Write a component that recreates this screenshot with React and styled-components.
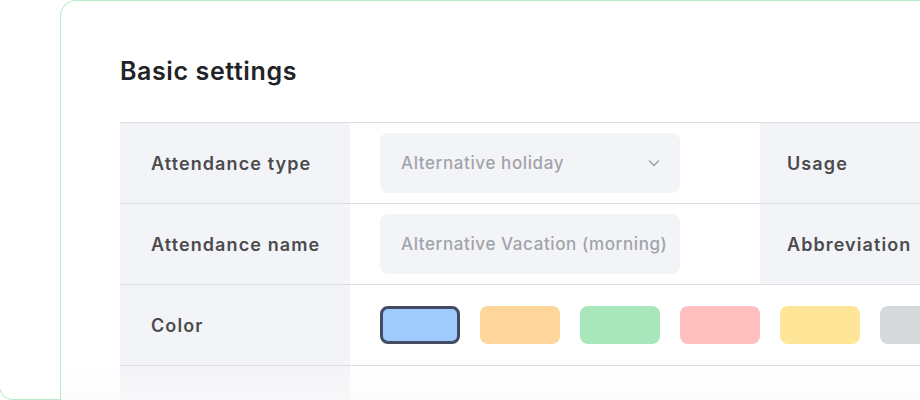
import React from 'react';
import styled, { createGlobalStyle } from 'styled-components';

const GlobalStyle = createGlobalStyle`
  html, body {
    margin: 0;
    padding: 0;
    background: #ffffff;
    overflow: hidden;
  }
  body {
    font-family: Inter, "Noto Sans", "Liberation Sans", sans-serif;
  }
`;

const Page = styled.div`
  position: relative;
  width: 920px;
  height: 400px;
  overflow: hidden;
  background: #ffffff;
`;

const CornerDecor = styled.div`
  position: absolute;
  left: -1px;
  bottom: 0;
  width: 62px;
  height: 40px;
  border-left: 1px solid #b9ebcb;
  border-bottom: 1px solid #b9ebcb;
  border-bottom-left-radius: 14px;
  box-sizing: border-box;
`;

const Card = styled.section`
  position: relative;
  margin-left: 60px;
  height: 400px;
  box-sizing: border-box;
  border-left: 1px solid #b9ebcb;
  border-top: 1px solid #b9ebcb;
  border-top-left-radius: 16px;
  padding: 55px 0 0 59px;
`;

const Title = styled.h2`
  margin: 0 0 36px;
  font-size: 25px;
  line-height: 30px;
  font-weight: 600;
  color: #222326;
  letter-spacing: 0.6px;
`;

const Table = styled.div`
  width: 1100px;
  border-top: 1px solid #dcdde1;
`;

const Row = styled.div`
  display: grid;
  grid-template-columns: 230px 410px 230px 230px;
  height: 80px;
  border-bottom: 1px solid #dcdde1;
`;

const Label = styled.div`
  display: flex;
  align-items: center;
  padding-left: ${(p) => p.inset || '31px'};
  background: #f3f4f8;
  font-size: 18px;
  font-weight: 600;
  letter-spacing: 1.1px;
  color: #4b4b4e;
`;

const Value = styled.div`
  display: flex;
  align-items: center;
  gap: 20px;
  padding-left: 30px;
  grid-column: ${(p) => p.span || 'auto'};
`;

const Field = styled.div`
  display: flex;
  align-items: center;
  justify-content: space-between;
  box-sizing: border-box;
  width: 300px;
  height: 60px;
  padding: 0 19px 0 21px;
  background: #f3f4f8;
  border-radius: 8px;
  font-size: 17px;
  font-weight: 500;
  letter-spacing: 0.6px;
  color: #a2a3a9;
  white-space: nowrap;
`;

const Swatch = styled.div`
  flex: none;
  width: 80px;
  height: 38px;
  box-sizing: border-box;
  border-radius: 8px;
  background: ${(p) => p.color};
  border: ${(p) => (p.selected ? '3px solid #414b63' : 'none')};
`;

const Fade = styled.div`
  position: absolute;
  left: 0;
  right: -40px;
  bottom: 0;
  height: 36px;
  pointer-events: none;
  background: linear-gradient(
    to bottom,
    rgba(250, 250, 250, 0),
    rgba(250, 250, 250, 0.6)
  );
`;

const Chevron = () => (
  <svg width="14" height="14" viewBox="0 0 14 14" fill="none">
    <polyline
      points="2.5,5 7,9.5 11.5,5"
      stroke="#9c9da3"
      strokeWidth="1.4"
      strokeLinecap="round"
      strokeLinejoin="round"
    />
  </svg>
);

const colors = ['#9ecbfb', '#fed59b', '#a8e6bb', '#ffbfbf', '#fee598', '#d6d9dc'];

export default function App() {
  return (
    <Page>
      <GlobalStyle />
      <CornerDecor />
      <Card>
        <Title>Basic settings</Title>
        <Table>
          <Row>
            <Label>Attendance type</Label>
            <Value>
              <Field>
                Alternative holiday
                <Chevron />
              </Field>
            </Value>
            <Label inset="27px">Usage</Label>
            <Value />
          </Row>
          <Row>
            <Label>Attendance name</Label>
            <Value>
              <Field>Alternative Vacation (morning)</Field>
            </Value>
            <Label inset="27px">Abbreviation</Label>
            <Value />
          </Row>
          <Row>
            <Label>Color</Label>
            <Value span="2 / 5">
              {colors.map((c, i) => (
                <Swatch key={c} color={c} selected={i === 0} />
              ))}
            </Value>
          </Row>
          <Row>
            <Label />
            <Value />
          </Row>
        </Table>
        <Fade />
      </Card>
    </Page>
  );
}
